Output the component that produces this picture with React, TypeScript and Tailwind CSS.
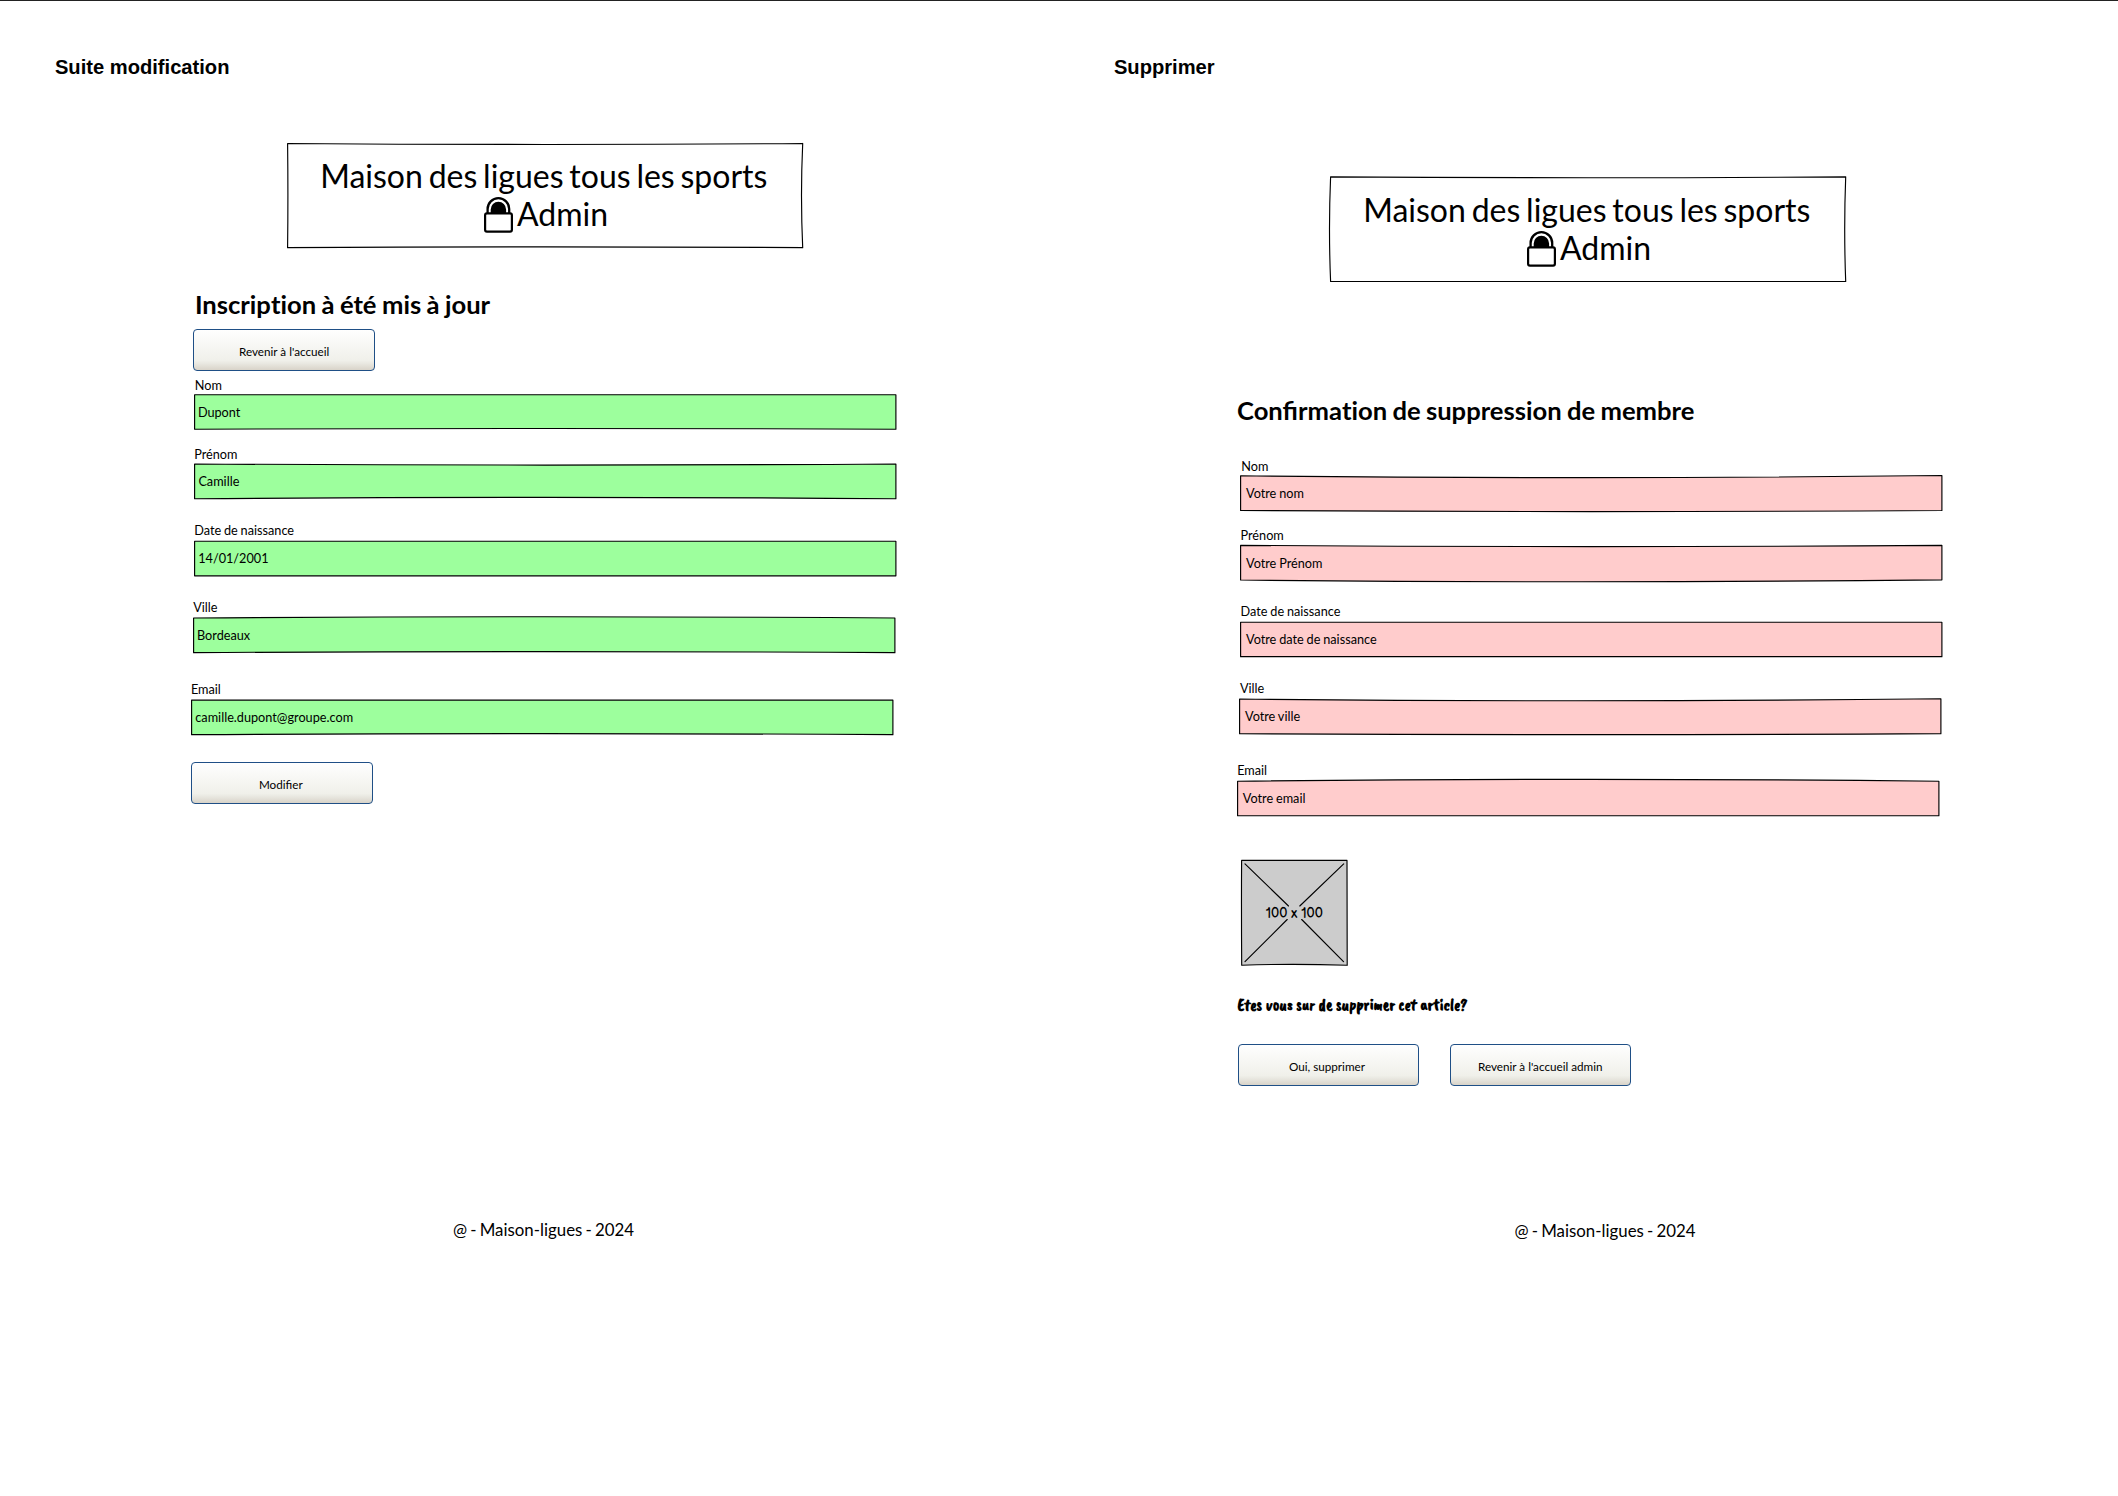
import React from "react";

type Edge = [start: number, middle: number, end: number];

/* Hand-drawn looking rectangle: top and bottom edges bow slightly. */
function SketchBox({
  width,
  top,
  bottom,
  left = [0.5, 0.5],
  right,
  fill,
}: {
  width: number;
  top: Edge;
  bottom: Edge;
  left?: [number, number];
  right?: [number, number];
  fill: string;
}) {
  const bow = (e: Edge) => 2 * e[1] - (e[0] + e[2]) / 2;
  const r = right ?? [width, width];
  const d = [
    `M0.5 ${top[0]}`,
    `Q${width / 2} ${bow(top)} ${width} ${top[2]}`,
    `Q${2 * r[1] - width} ${(top[2] + bottom[2]) / 2} ${r[0]} ${bottom[2]}`,
    `Q${width / 2} ${bow(bottom)} ${left[0]} ${bottom[0]}`,
    `Q${2 * left[1] - 0.5} ${(top[0] + bottom[0]) / 2} 0.5 ${top[0]}Z`,
  ].join("");
  return (
    <svg className="absolute inset-0 h-full w-full overflow-visible" aria-hidden="true">
      <path d={d} transform="translate(0.1 0.25)" fill={fill} stroke="#000" strokeWidth={1.15} strokeLinejoin="round" />
    </svg>
  );
}

function Lock() {
  return (
    <svg className="mt-[2px] h-9 w-[29px] shrink-0" viewBox="0 0 29 36" aria-hidden="true">
      <path d="M3.6 16.5V12a10.8 10.8 0 0 1 21.6 0v4.5" fill="none" stroke="#000" strokeWidth={2.3} />
      <path d="M6.7 16.5V12.4a7.7 7.7 0 0 1 15.4 0v4.1Z" fill="#000" />
      <rect x="1.1" y="16.4" width="26.8" height="18.2" rx="1.8" fill="#fff" stroke="#000" strokeWidth={2.2} />
    </svg>
  );
}

function Banner({ className, top, bottom, left, right }: { className: string; top: Edge; bottom: Edge; left: [number, number]; right: [number, number] }) {
  return (
    <header className={`relative h-[104px] w-[515px] ${className}`}>
      <SketchBox width={515.6} top={top} bottom={bottom} left={left} right={right} fill="#fff" />
      <div className="relative pt-[14px] text-[32px] leading-[38px]">
        <h1 className="pl-[33.2px] whitespace-nowrap [word-spacing:-2.4px]">Maison des ligues tous les sports</h1>
        <div className="flex h-[38px] gap-[4px] pl-[197px]">
          <Lock />
          <span>Admin</span>
        </div>
      </div>
    </header>
  );
}

function Field({
  className,
  label,
  value,
  gap,
  labelPad,
  valuePad,
  fill,
  top,
  bottom,
}: {
  className: string;
  label: string;
  value: string;
  gap: string;
  labelPad: string;
  valuePad: string;
  fill: string;
  top: Edge;
  bottom: Edge;
}) {
  return (
    <div className={`w-[702px] text-[12.7px] leading-4 [word-spacing:-0.4px] ${className}`}>
      <div className={`h-4 pt-px ${labelPad}`}>{label}</div>
      <div className={`relative h-[35px] ${gap}`}>
        <SketchBox width={701.8} top={top} bottom={bottom} fill={fill} />
        <div className={`relative pt-[10px] ${valuePad}`}>{value}</div>
      </div>
    </div>
  );
}

function PushButton({ className = "", children }: { className?: string; children: React.ReactNode }) {
  return (
    <button
      className={`flex h-[42px] w-[181.5px] justify-center rounded-[4px] border border-[#1f4f86] bg-[linear-gradient(#ffffff_0%,#f0f0ea_75%,#e9e8e1_82%,#d6d0c5_100%)] bg-origin-border pt-[13px] text-[11.7px] leading-4 ${className}`}
    >
      {children}
    </button>
  );
}

/* Keeps "t" and "i" as separate glyphs. */
const Ti = () => <span className="[font-variant-ligatures:none]">ti</span>;

const GREEN = "#9dff9d";
const PINK = "#ffcccc";

export default function App() {
  return (
    <main
      className="grid h-[1496px] w-[2118px] grid-cols-[1059px_1059px] overflow-hidden border-t border-[#222] bg-white text-black"
      style={{ fontFamily: "Lato, 'Open Sans', sans-serif" }}
    >
      <section className="flex flex-col items-start">
        <h2 className="mt-[54px] ml-[54.9px] font-['Liberation_Sans',sans-serif] text-[20.15px] leading-6 font-bold">
          Suite modification
        </h2>
        <Banner
          className="mt-16 ml-[287px]"
          top={[0.2, 1.2, 0.2]}
          bottom={[104.4, 103.6, 104.4]}
          left={[0.5, 0.8]}
          right={[515.6, 514.4]}
        />
        <h3 className="mt-[41px] ml-[194.9px] text-[25.6px] leading-8 font-bold [word-spacing:-0.8px]">
          Inscrip<Ti />on à été mis à jour
        </h3>
        <PushButton className="mt-[9px] ml-[193.4px]">Revenir à l'accueil</PushButton>

        <Field className="mt-[5px] ml-[194px]" label="Nom" value="Dupont" gap="mt-[2px]" labelPad="pl-[0.8px]" valuePad="pl-[3.9px]" fill={GREEN} top={[0.5, 0.4, 0.5]} bottom={[35, 34.2, 35]} />
        <Field className="mt-4 ml-[194px]" label="Prénom" value="Camille" gap="mt-[2px]" labelPad="pl-[0.2px]" valuePad="pl-[4.4px]" fill={GREEN} top={[0.7, 1.8, 0.7]} bottom={[35.5, 34.1, 35.5]} />
        <Field className="mt-[23px] ml-[194px]" label="Date de naissance" value="14/01/2001" gap="mt-[3px]" labelPad="pl-[0.2px]" valuePad="pl-[4.2px]" fill={GREEN} top={[1, 1, 1]} bottom={[35.6, 35.6, 35.6]} />
        <Field className="mt-[23px] ml-[193px]" label="Ville" value="Bordeaux" gap="mt-[3px]" labelPad="pl-[0.2px]" valuePad="pl-[4px]" fill={GREEN} top={[0.7, -0.5, 0.7]} bottom={[35.4, 34.3, 35.4]} />
        <Field className="mt-7 ml-[191px]" label="Email" value="camille.dupont@groupe.com" gap="mt-[3px]" labelPad="-ml-[0.1px]" valuePad="pl-[4.3px]" fill={GREEN} top={[0.9, 0.9, 0.9]} bottom={[35.4, 34.4, 35.4]} />

        <PushButton className="mt-7 ml-[191.4px] pr-[8.6px] pl-[6px]">Modifier</PushButton>
        <footer className="mt-[415px] ml-[452.9px] text-[16.85px] leading-[22px] [word-spacing:-1.1px]">
          @ - Maison-ligues - 2024
        </footer>
      </section>

      <section className="flex flex-col items-start">
        <h2 className="mt-[54px] ml-[54.9px] font-['Liberation_Sans',sans-serif] text-[20.15px] leading-6 font-bold">
          Supprimer
        </h2>
        <Banner
          className="mt-[98px] ml-[271px]"
          top={[-0.4, 0.5, -0.4]}
          bottom={[104.2, 103.9, 104.2]}
          left={[0.5, -0.6]}
          right={[515.6, 514.6]}
        />
        <h3 className="mt-[113px] ml-[178px] text-[25.6px] leading-8 font-bold [word-spacing:-0.9px]">
          Confirma<Ti />on de suppression de membre
        </h3>

        <Field className="mt-[31px] ml-[181px]" label="Nom" value="Votre nom" gap="mt-[2px]" labelPad="pl-[1.3px]" valuePad="pl-[6px]" fill={PINK} top={[0.5, 2.4, 0.3]} bottom={[35.2, 36.3, 35.2]} />
        <Field className="mt-4 ml-[181px]" label="Prénom" value="Votre Prénom" gap="mt-[3px]" labelPad="pl-[0.5px]" valuePad="pl-[6px]" fill={PINK} top={[0.1, 1.3, 0.1]} bottom={[34.8, 36.5, 34.6]} />
        <Field className="mt-[22px] ml-[181px]" label="Date de naissance" value="Votre date de naissance" gap="mt-[3px]" labelPad="pl-[0.5px]" valuePad="pl-[6px]" fill={PINK} top={[1, 1, 1]} bottom={[35.4, 34.7, 35.4]} />
        <Field className="mt-[23px] ml-[180px]" label="Ville" value="Votre ville" gap="mt-[3px]" labelPad="pl-[0.9px]" valuePad="pl-[6px]" fill={PINK} top={[0.8, 2.5, 0.5]} bottom={[35.4, 36.4, 35.4]} />
        <Field className="mt-7 ml-[178px]" label="Email" value="Votre email" gap="mt-[3px]" labelPad="pl-[0.2px]" valuePad="pl-[5.8px]" fill={PINK} top={[1, -0.9, 1]} bottom={[35.5, 35.6, 35.5]} />

        <div className="relative mt-[45px] ml-[182.3px] flex h-[106px] w-[106px] justify-center">
          <svg className="absolute inset-0 overflow-visible" width="106" height="106" aria-hidden="true">
            <path d="M0.6 0.4H106L106.2 105.3Q53 103.5 0.7 105.2Q0.3 50 0.6 0.4Z" fill="#cccccc" stroke="#000" strokeWidth={1.15} strokeLinejoin="round" />
            <path d="M4 3.9L47.5 46M102.7 3.9L58.8 46M4 101.7L46.2 59.5M102.5 101.7L60.7 59.5" stroke="#000" strokeWidth={1.15} strokeLinecap="round" />
          </svg>
          <span className="relative pt-[46px] font-['Balsamiq_Sans',Lato,sans-serif] text-[13.8px] leading-4">100 x 100</span>
        </div>

        <p className="mt-[27px] ml-[178.4px] font-['Caveat_Brush',Lato,sans-serif] text-[17px] leading-6 font-bold whitespace-nowrap">
          Etes vous sur de supprimer cet article?
        </p>

        <div className="mt-[27px] ml-[178.5px] flex gap-[30.5px]">
          <PushButton className="pr-[8.6px] pl-[6px]">Oui, supprimer</PushButton>
          <PushButton>Revenir à l'accueil admin</PushButton>
        </div>
        <footer className="mt-[134px] ml-[455.4px] text-[16.85px] leading-[22px] [word-spacing:-1.1px]">
          @ - Maison-ligues - 2024
        </footer>
      </section>
    </main>
  );
}
